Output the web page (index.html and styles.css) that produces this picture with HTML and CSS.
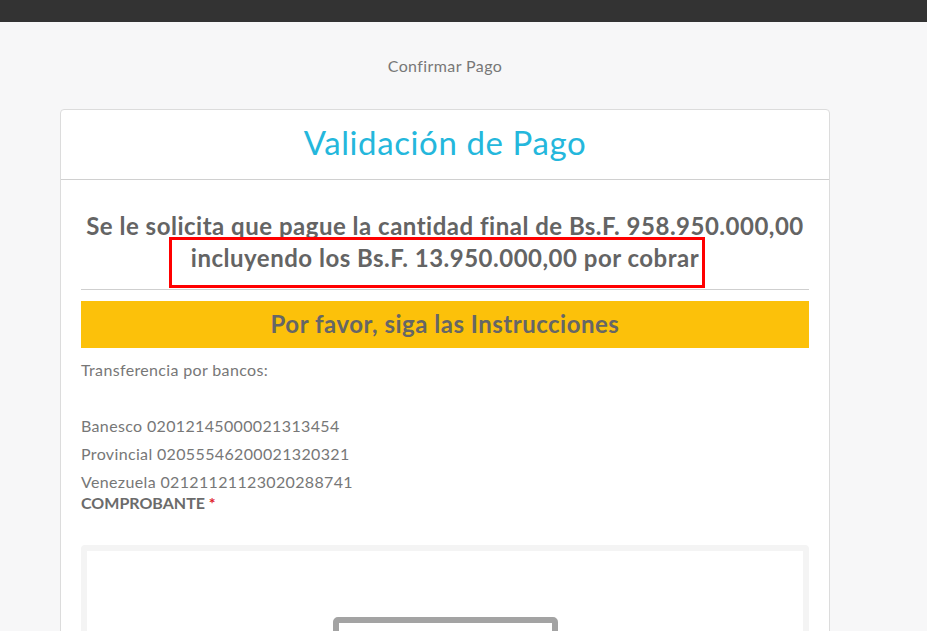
FILE: index.html
```html
<!DOCTYPE html>
<html lang="es">
<head>
<meta charset="utf-8">
<title>Confirmar Pago</title>
<link rel="stylesheet" href="styles.css">
</head>
<body>
<div class="topbar"></div>
<div class="page">
  <div class="crumb">Confirmar Pago</div>
  <div class="card">
    <div class="card-header">
      <h1 class="title">Validación de Pago</h1>
    </div>
    <div class="card-body">
      <div class="amount-wrap">
        <h2 class="amount">Se le solicita que pague la cantidad final de Bs.F. 958.950.000,00<br>incluyendo los Bs.F. 13.950.000,00 por cobrar</h2>
        <div class="highlight"></div>
      </div>
      <hr class="sep">
      <div class="banner">Por favor, siga las Instrucciones</div>
      <div class="info">
        <p>Transferencia por bancos:</p>
        <p>&nbsp;</p>
        <p>Banesco 02012145000021313454</p>
        <p>Provincial 02055546200021320321</p>
        <p>Venezuela 02121121123020288741</p>
      </div>
      <div class="label">COMPROBANTE <span class="req">*</span></div>
      <div class="upload">
        <div class="preview"></div>
      </div>
    </div>
  </div>
</div>
</body>
</html>
```

FILE: styles.css
```css
* { box-sizing: border-box; }
html, body { margin: 0; padding: 0; }
body {
  background: #f7f7f8;
  font-family: Lato, "Open Sans", "Liberation Sans", sans-serif;
  color: #777;
  height: 631px;
  overflow: hidden;
}
.topbar {
  height: 22px;
  background: #333333;
}
.page {
  padding: 0 97px 0 60px;
}
.crumb {
  text-align: center;
  font-size: 16px;
  letter-spacing: 0.4px;
  color: #777;
  height: 87px;
  padding-top: 35px;
  line-height: 18px;
}
.card {
  background: #fff;
  border: 1px solid #dcdcdc;
  border-radius: 4px;
  height: 600px;
}
.card-header {
  height: 70px;
  border-bottom: 1px solid #d0d0d0;
  display: flex;
  align-items: center;
  justify-content: center;
}
.title {
  margin: 0;
  font-weight: 400;
  font-size: 33px;
  letter-spacing: 0.6px;
  color: #24b7dc;
  padding-bottom: 6px;
}
.card-body {
  padding: 30px 20px 0 20px;
}
.amount-wrap {
  position: relative;
}
.amount {
  margin: 0;
  text-align: center;
  font-size: 24px;
  line-height: 32px;
  font-weight: 700;
  color: #646464;
  letter-spacing: 0.5px;
}
.highlight {
  position: absolute;
  left: 88px;
  top: 27px;
  width: 536px;
  height: 51px;
  border: 3px solid #ff0000;
}
.sep {
  margin: 15px 0 11px 0;
  border: 0;
  border-top: 1px solid #cfcfcf;
}
.banner {
  background: #fcc10a;
  height: 47px;
  display: flex;
  align-items: center;
  justify-content: center;
  font-size: 24px;
  font-weight: 700;
  letter-spacing: 0.5px;
  color: #666;
  padding-bottom: 2px;
}
.info {
  margin-top: 8px;
  font-size: 16px;
  letter-spacing: 0.35px;
  line-height: 28px;
  color: #777;
}
.info p { margin: 0; }
.label {
  font-size: 16px;
  font-weight: 700;
  color: #6b6b6b;
  line-height: 14px;
  margin-top: 0;
}
.req { color: #e0202a; }
.upload {
  margin-top: 35px;
  border: 6px solid #f4f4f4;
  border-radius: 4px;
  height: 200px;
  display: flex;
  justify-content: center;
  padding-top: 66px;
}
.preview {
  width: 225px;
  height: 120px;
  border: 6px solid #a3a3a3;
  border-radius: 5px;
}
```
